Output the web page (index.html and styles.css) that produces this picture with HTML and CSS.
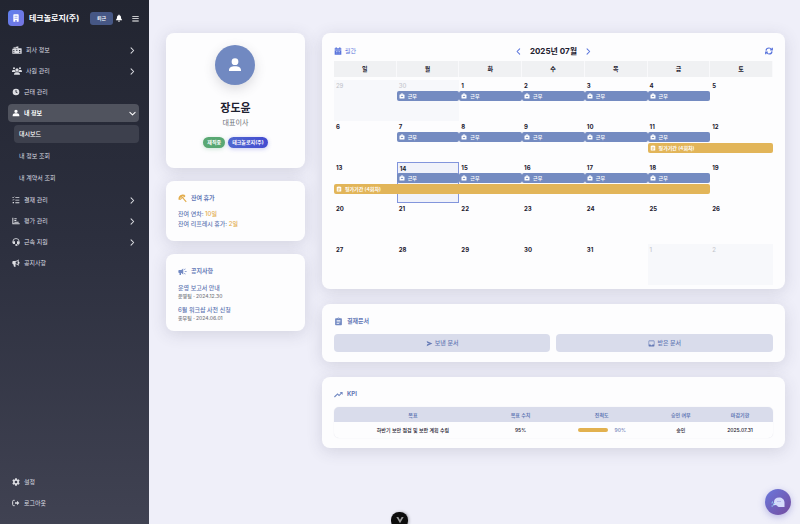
FILE: index.html
```html
<!DOCTYPE html>
<html lang="ko">
<head>
<meta charset="utf-8">
<meta name="viewport" content="width=device-width, initial-scale=1">
<title>테크놀로지(주) 대시보드</title>
<link rel="stylesheet" href="styles.css">
</head>
<body>
<svg class="sprite" aria-hidden="true">
  <symbol id="i-user" viewBox="0 0 24 24"><path d="M12 2a5 5 0 1 1 0 10 5 5 0 0 1 0-10zm-3 11h6c3.500 0 7 2.500 7 6.500V22H2v-2.500C2 15.500 5.500 13 9 13z"/></symbol>
  <symbol id="i-person" viewBox="0 0 24 24"><path d="M12 3a4.500 4.500 0 1 1 0 9 4.500 4.500 0 0 1 0-9zm0 10.500c5 0 8 2 8 5V20H4v-1.500c0-3 3-5 8-5z"/></symbol>
  <symbol id="i-right" viewBox="0 0 24 24"><path d="M7 3l9 9-9 9" fill="none" stroke="currentColor" stroke-width="3.500" stroke-linecap="round" stroke-linejoin="round"/></symbol>
  <symbol id="i-left" viewBox="0 0 24 24"><path d="M16 3l-9 9 9 9" fill="none" stroke="currentColor" stroke-width="3.500" stroke-linecap="round" stroke-linejoin="round"/></symbol>
  <symbol id="i-down" viewBox="0 0 24 24"><path d="M3 8l9 9 9-9" fill="none" stroke="currentColor" stroke-width="3.500" stroke-linecap="round" stroke-linejoin="round"/></symbol>
  <symbol id="i-case" viewBox="0 0 24 24"><path fill-rule="evenodd" d="M7 6V4a2 2 0 0 1 2-2h6a2 2 0 0 1 2 2v2h3a2 2 0 0 1 2 2v12a2 2 0 0 1-2 2H4a2 2 0 0 1-2-2V8a2 2 0 0 1 2-2zm2.500 0h5V4.500h-5zM10.500 11v2h-3v2.500h9V13h-3v-2z"/></symbol>
  <symbol id="i-clip" viewBox="0 0 24 24"><path fill-rule="evenodd" d="M19 3h-4.180C14.400 1.840 13.300 1 12 1s-2.400.840-2.820 2H5a2 2 0 0 0-2 2v15a2 2 0 0 0 2 2h14a2 2 0 0 0 2-2V5a2 2 0 0 0-2-2zm-7 0a1 1 0 1 1 0 2 1 1 0 0 1 0-2zM7 8h10v2H7zm0 4h10v2H7zm0 4h7v2H7z"/></symbol>
</svg>

<div class="app">
  <aside class="sidebar">
    <header class="brand">
      <span class="brand-logo"><svg class="icon" viewBox="0 0 24 24"><path fill-rule="evenodd" d="M6 1h12a2 2 0 0 1 2 2v20h-6v-5h-4v5H4V3a2 2 0 0 1 2-2zm2 4v3h3V5zm5 0v3h3V5zm-5 6v3h3v-3zm5 0v3h3v-3z"/></svg></span>
      <strong class="brand-name">테크놀로지(주)</strong>
      <button class="leave" type="button">퇴근</button>
      <button class="icon-btn" type="button" aria-label="알림"><svg class="icon" viewBox="0 0 24 24"><path d="M12 23a3 3 0 0 0 3-3H9a3 3 0 0 0 3 3zm9-6c-1.500-1.500-3-2.500-3-7 0-3.500-2-5.700-4.700-6.300V2.500a1.300 1.300 0 0 0-2.600 0v1.200C8 4.300 6 6.500 6 10c0 4.500-1.500 5.500-3 7-.7.800 0 2 1 2h16c1 0 1.700-1.200 1-2z"/></svg></button>
      <button class="icon-btn menu-btn" type="button" aria-label="메뉴"><svg class="icon small" viewBox="0 0 24 24"><path d="M1 3h22v3H1zm0 8h22v3H1zm0 8h22v3H1z"/></svg></button>
    </header>

    <nav class="nav">
      <a class="nav-item" href="#company"><svg class="icon wide" viewBox="0 0 30 24"><path fill-rule="evenodd" d="M10 3l9-2v6h9a1 1 0 0 1 1 1v15H1V8h4V3h3v5h2zm3 4v3h3V7zM4 12v3h3v-3zm9 0v3h3v-3zm8 0v3h4v-3zM4 17v3h3v-3zm17 0v3h4v-3z"/></svg><span>회사 정보</span><svg class="icon small"><use href="#i-right"/></svg></a>
      <a class="nav-item" href="#staff"><svg class="icon wide" viewBox="0 0 30 24"><path d="M6 1a3 3 0 1 1 0 6 3 3 0 0 1 0-6zm18 0a3 3 0 1 1 0 6 3 3 0 0 1 0-6zm-9 3a5 5 0 1 1 0 10 5 5 0 0 1 0-10zM4 9h4l2 3c0 1 .5 2 1 3H0c0-4 1-6 4-6zm18 0h4c3 0 4 2 4 6H19c.5-1 1-2 1-3zM12 16h6c4 0 6 3 6 7H6c0-4 2-7 6-7z"/></svg><span>사원 관리</span><svg class="icon small"><use href="#i-right"/></svg></a>
      <a class="nav-item" href="#attendance"><svg class="icon" viewBox="0 0 24 24"><path fill-rule="evenodd" d="M12 2a10 10 0 1 1 0 20 10 10 0 0 1 0-20zm-1.300 4v7l5 3 1.300-2-3.700-2.400V6z"/></svg><span>근태 관리</span></a>
      <a class="nav-item active" href="#me"><svg class="icon"><use href="#i-user"/></svg><span>내 정보</span><svg class="icon small"><use href="#i-down"/></svg></a>
      <div class="subnav">
        <a class="sub-item current" href="#dashboard">대시보드</a>
        <a class="sub-item" href="#profile">내 정보 조회</a>
        <a class="sub-item" href="#contract">내 계약서 조회</a>
      </div>
      <a class="nav-item" href="#approval"><svg class="icon" viewBox="0 0 24 24"><path d="M1 4l2 2 4-4M1 11l2 2 4-4" fill="none" stroke="currentColor" stroke-width="2"/><path d="M10 3h12v2.500H10zm0 8h12v2.500H10zm0 8h12v2.500H10zM2 18h4v4H2z"/></svg><span>결재 관리</span><svg class="icon small"><use href="#i-right"/></svg></a>
      <a class="nav-item" href="#review"><svg class="icon" viewBox="0 0 24 24"><path d="M1 2h3v17h19v3H1zM7 4h7v3H7zm0 5h6v3H7zm0 5h13v3H7z"/></svg><span>평가 관리</span><svg class="icon small"><use href="#i-right"/></svg></a>
      <a class="nav-item" href="#support"><svg class="icon" viewBox="0 0 24 24"><path d="M2.500 14v-3a9.500 9.500 0 0 1 19 0v5c0 3-2 5-5 5H12" fill="none" stroke="currentColor" stroke-width="2.500"/><path d="M5 10h4v8H5a3 3 0 0 1-3-3v-2a3 3 0 0 1 3-3zm10 0h4a3 3 0 0 1 3 3v2a3 3 0 0 1-3 3h-4zM10 19h5v4h-5z"/></svg><span>근속 지원</span><svg class="icon small"><use href="#i-right"/></svg></a>
      <a class="nav-item" href="#notice"><svg class="icon" viewBox="0 0 24 24"><path fill-rule="evenodd" d="M20 1v7c2 .5 3 1.500 3 3s-1 2.500-3 3v7c-3-3-6-5-10-5l1 7H6l-2-7c-2 0-3-1-3-3V9c0-2 1-3 3-3h6c4 0 7-2 10-5zm-3 5c-2 1.500-4 2.300-6 2.600v4.800c2 .3 4 1.100 6 2.600z"/></svg><span>공지사항</span></a>
    </nav>

    <nav class="nav nav-foot">
      <a class="nav-item" href="#settings"><svg class="icon" viewBox="0 0 24 24"><path fill-rule="evenodd" d="M9.500 1h5l.8 3.200 1.900 1.100L20.400 4l2.500 4.300-2.300 2.500v2.400l2.300 2.500-2.500 4.300-3.200-1.300-1.900 1.100-.8 3.200h-5l-.8-3.200-1.900-1.100L3.600 20l-2.500-4.300 2.300-2.500v-2.400L1.100 8.300 3.600 4l3.200 1.300 1.900-1.100zM12 8a4 4 0 1 0 0 8 4 4 0 0 0 0-8z"/></svg><span>설정</span></a>
      <a class="nav-item" href="#logout"><svg class="icon" viewBox="0 0 24 24"><path d="M8 4H5a3 3 0 0 0-3 3v10a3 3 0 0 0 3 3h3" fill="none" stroke="currentColor" stroke-width="3"/><path d="M15 5l7 7-7 7v-4.500H9v-5h6z"/></svg><span>로그아웃</span></a>
    </nav>
  </aside>

  <main class="main">
    <div class="column left">
      <section class="card profile">
        <span class="avatar"><svg class="icon"><use href="#i-person"/></svg></span>
        <h1 class="name">장도윤</h1>
        <p class="position">대표이사</p>
        <div class="badges"><span class="badge green">재직중</span><span class="badge blue">테크놀로지(주)</span></div>
      </section>

      <section class="card leave-card">
        <h2 class="card-title"><svg class="icon title-icon amber" viewBox="0 0 24 24"><path d="M2 16C0 9 4 3 10 2c4-1 8 0 10 2L15 6l-3-1-3 4-3 1-1 5z"/><path d="M10 7l12 14M14 8l5-2M6 15l4-5" fill="none" stroke="currentColor" stroke-width="3"/></svg>잔여 휴가</h2>
        <p class="line">잔여 연차: <span class="amber">10일</span></p>
        <p class="line">잔여 리프레시 휴가: <span class="amber">2일</span></p>
      </section>

      <section class="card notice-card">
        <h2 class="card-title"><svg class="icon title-icon" viewBox="0 0 24 24"><path d="M18 11h5v2.500h-5zm-2 6.600l1.200-1.600 3.200 2.400-1.200 1.600zM20.400 5.600L19.200 4 16 6.400 17.200 8zM3 8a2 2 0 0 0-2 2v4a2 2 0 0 0 2 2h1v5h4v-5h1l5 4V4L9 8z"/></svg>공지사항</h2>
        <a class="post" href="#post-1"><span>운영 보고서 안내</span><small>운영팀 · 2024.12.30</small></a>
        <a class="post" href="#post-2"><span>6월 워크샵 사전 신청</span><small>총무팀 · 2024.06.01</small></a>
      </section>
    </div>

    <div class="column right">
      <section class="card calendar">
        <header class="cal-head">
          <button class="view" type="button"><svg class="icon" viewBox="0 0 24 24"><path fill-rule="evenodd" d="M5 1h3v3h8V1h3v3h3v4H2V4h3zM2 9.500h20V23H2zM6 12v2h2v-2zm5 0v2h2v-2zm5 0v2h2v-2zM6 17v2h2v-2zm5 0v2h2v-2zm5 0v2h2v-2z"/></svg>월간</button>
          <div class="month">
            <button class="icon-btn" type="button" aria-label="이전 달"><svg class="icon small"><use href="#i-left"/></svg></button>
            <h2>2025년 07월</h2>
            <button class="icon-btn" type="button" aria-label="다음 달"><svg class="icon small"><use href="#i-right"/></svg></button>
          </div>
          <button class="icon-btn refresh" type="button" aria-label="새로고침"><svg class="icon" viewBox="0 0 24 24"><path d="M3 11c.5-5 4.500-8 9-8 3.500 0 6 1.500 8 4.500M22 2v6.500h-6.500M21 13c-.5 5-4.500 8-9 8-3.500 0-6-1.500-8-4.500M2 22v-6.500h6.500" fill="none" stroke="currentColor" stroke-width="3.500"/></svg></button>
        </header>
        <div class="weekdays"><span>일</span><span>월</span><span>화</span><span>수</span><span>목</span><span>금</span><span>토</span></div>

        <div class="week">
          <time class="day c1 other">29</time><time class="day c2 other">30</time><time class="day c3">1</time><time class="day c4">2</time><time class="day c5">3</time><time class="day c6">4</time><time class="day c7">5</time>
          <span class="event c2"><svg class="icon"><use href="#i-case"/></svg>근무</span><span class="event c3"><svg class="icon"><use href="#i-case"/></svg>근무</span><span class="event c4"><svg class="icon"><use href="#i-case"/></svg>근무</span><span class="event c5"><svg class="icon"><use href="#i-case"/></svg>근무</span><span class="event c6"><svg class="icon"><use href="#i-case"/></svg>근무</span>
        </div>
        <div class="week">
          <time class="day c1">6</time><time class="day c2">7</time><time class="day c3">8</time><time class="day c4">9</time><time class="day c5">10</time><time class="day c6">11</time><time class="day c7">12</time>
          <span class="event c2"><svg class="icon"><use href="#i-case"/></svg>근무</span><span class="event c3"><svg class="icon"><use href="#i-case"/></svg>근무</span><span class="event c4"><svg class="icon"><use href="#i-case"/></svg>근무</span><span class="event c5"><svg class="icon"><use href="#i-case"/></svg>근무</span><span class="event c6"><svg class="icon"><use href="#i-case"/></svg>근무</span>
          <span class="event period span-end"><svg class="icon"><use href="#i-clip"/></svg>평가기간 (4회차)</span>
        </div>
        <div class="week">
          <time class="day c1">13</time><time class="day c2 today">14</time><time class="day c3">15</time><time class="day c4">16</time><time class="day c5">17</time><time class="day c6">18</time><time class="day c7">19</time>
          <span class="event c2"><svg class="icon"><use href="#i-case"/></svg>근무</span><span class="event c3"><svg class="icon"><use href="#i-case"/></svg>근무</span><span class="event c4"><svg class="icon"><use href="#i-case"/></svg>근무</span><span class="event c5"><svg class="icon"><use href="#i-case"/></svg>근무</span><span class="event c6"><svg class="icon"><use href="#i-case"/></svg>근무</span>
          <span class="event period span-start"><svg class="icon"><use href="#i-clip"/></svg>평가기간 (4회차)</span>
        </div>
        <div class="week">
          <time class="day c1">20</time><time class="day c2">21</time><time class="day c3">22</time><time class="day c4">23</time><time class="day c5">24</time><time class="day c6">25</time><time class="day c7">26</time>
        </div>
        <div class="week">
          <time class="day c1">27</time><time class="day c2">28</time><time class="day c3">29</time><time class="day c4">30</time><time class="day c5">31</time><time class="day c6 other">1</time><time class="day c7 other">2</time>
        </div>
      </section>

      <section class="card docs">
        <h2 class="card-title"><svg class="icon title-icon"><use href="#i-clip"/></svg>결재문서</h2>
        <div class="doc-actions">
          <button type="button"><svg class="icon small" viewBox="0 0 24 24"><path d="M2 3l20 9-20 9 3-7.500 8-1.500-8-1.500z"/></svg>보낸 문서</button>
          <button type="button"><svg class="icon small" viewBox="0 0 24 24"><path fill-rule="evenodd" d="M4 2h16a2 2 0 0 1 2 2v16a2 2 0 0 1-2 2H4a2 2 0 0 1-2-2V4a2 2 0 0 1 2-2zm0 2.500V15h5a3 3 0 0 0 6 0h5V4.500z"/></svg>받은 문서</button>
        </div>
      </section>

      <section class="card kpi">
        <h2 class="card-title"><svg class="icon title-icon" viewBox="0 0 24 24"><path d="M15 5l3 3-4.500 4.500-4-4L0 17.500 2.200 20l7.300-7.500 4 4 6.700-6.300L23 13V5z"/></svg>KPI</h2>
        <table>
          <colgroup><col class="w-goal"><col class="w-value"><col class="w-progress"><col class="w-state"><col class="w-due"></colgroup>
          <thead><tr><th>목표</th><th>목표 수치</th><th>진척도</th><th>승인 여부</th><th>마감기한</th></tr></thead>
          <tbody><tr>
            <td>하반기 보안 점검 및 보완 계획 수립</td><td>95%</td>
            <td><div class="progress"><span class="bar"></span><span>90%</span></div></td>
            <td>승인</td><td>2025.07.31</td>
          </tr></tbody>
        </table>
      </section>
    </div>
  </main>
</div>

<button class="chat" type="button" aria-label="채팅 상담"><svg class="icon" viewBox="0 0 28 24"><path d="M6 12c0-6 4-9 10-9s11 4 11 10v9h-9c-3 0-5-1-6-3l-3-1-5 1 1-3z" fill="#d5dcfb"/><path d="M3 11l-1 4M8 14l-5 5M1 20l2 1" fill="none" stroke="#8ed2f2" stroke-width="2"/><path d="M12 12l2-2 1 2 2-2 1 2 2-2" fill="none" stroke="#a9adea" stroke-width="1.500"/></svg></button>
<button class="devtools" type="button" aria-label="개발 도구"><svg class="icon" viewBox="0 0 24 24"><path d="M1 3h6l5 9 5-9h6L12 22z" fill="#9a9a9a"/></svg></button>
</body>
</html>
```

FILE: styles.css
```css
* { box-sizing: border-box; }

body {
  margin: 0;
  background: #efeff9;
  color: #1d2130;
  font: 6px/10px Inter, "Noto Sans CJK KR", sans-serif;
}

h1, h2, p { margin: 0; }
a { color: inherit; text-decoration: none; }
button { margin: 0; padding: 0; border: 0; background: none; color: inherit; font: inherit; cursor: pointer; }

.sprite { position: absolute; width: 0; height: 0; }
.icon { width: 8px; height: 8px; flex: none; fill: currentColor; }
.icon.small { width: 7px; height: 7px; }
.icon.wide { width: 10px; }
.icon-btn { display: flex; align-items: center; justify-content: center; }

.app { display: flex; min-height: 100vh; }

/* Sidebar */
.sidebar {
  display: flex;
  flex-direction: column;
  flex: none;
  width: 149px;
  padding: 10px 10px 12px 8px;
  background: linear-gradient(#222531, #2c2f3e 45%, #404252);
  color: #dcdde2;
}
.brand { display: flex; align-items: center; height: 16px; margin-bottom: 15px; color: #fff; }
.brand-logo {
  display: flex;
  align-items: center;
  justify-content: center;
  width: 16px;
  height: 16px;
  margin-right: 5px;
  border-radius: 4px;
  background: linear-gradient(135deg, #5e80ee, #7674e0);
}
.brand-name { flex: 1; font-size: 8px; white-space: nowrap; }
.leave {
  width: 23px;
  height: 13px;
  margin-right: 2px;
  border-radius: 3px;
  background: #465785;
  font-size: 5px;
  font-weight: 500;
  line-height: 13px;
}
.menu-btn { margin-left: 9px; }

.nav { display: flex; flex-direction: column; gap: 3px; }
.nav-item {
  display: flex;
  align-items: center;
  gap: 4px;
  height: 18px;
  padding: 0 3px 0 4px;
  border-radius: 4px;
}
.nav-item span { flex: 1; }
.nav-item.active { background: #50535e; color: #fff; font-weight: 600; }
.subnav { display: flex; flex-direction: column; gap: 4px; padding: 0 0 1px 6px; }
.sub-item { height: 18px; padding: 0 5px; border-radius: 4px; line-height: 18px; }
.sub-item.current { background: #3d404d; color: #fff; font-weight: 500; }
.nav-foot { margin-top: auto; }

/* Layout */
.main {
  display: grid;
  grid-template-columns: minmax(0, 3fr) minmax(0, 10fr);
  gap: 17px;
  align-items: start;
  flex: 1;
  padding: 33px 15px 16px 17px;
}
.column { display: flex; flex-direction: column; }
.left { gap: 13px; }
.right { gap: 15px; }
.card {
  padding: 12px;
  border-radius: 8px;
  background: #fdfdfe;
  box-shadow: 0 3px 16px rgba(60, 65, 95, 0.16);
}
.card-title {
  display: flex;
  align-items: center;
  gap: 4px;
  color: #6478b6;
  font-size: 6px;
  font-weight: 700;
  line-height: 12px;
}
.title-icon { width: 9px; height: 9px; color: #7289c2; }
.amber, .title-icon.amber { color: #e2ac4c; }

/* Profile */
.profile { display: flex; flex-direction: column; align-items: center; padding-bottom: 20px; }
.avatar {
  display: flex;
  align-items: center;
  justify-content: center;
  width: 40px;
  height: 40px;
  border-radius: 50%;
  background: #7189c1;
  box-shadow: 0 4px 12px rgba(60, 60, 80, 0.18);
  color: #fff;
}
.avatar .icon { width: 18px; height: 18px; }
.name { margin-top: 14px; font-size: 11px; line-height: 18px; }
.position { color: #6d6f78; font-size: 7px; line-height: 12px; }
.badges { display: flex; gap: 3px; margin-top: 8px; }
.badge {
  padding: 0 4px;
  border-radius: 6px;
  color: #fff;
  font-size: 5px;
  font-weight: 700;
  line-height: 11px;
}
.badge.green { background: #59a873; box-shadow: 0 1px 4px rgba(89, 168, 115, 0.3); }
.badge.blue { background: linear-gradient(90deg, #5068cf, #434bd0); box-shadow: 0 1px 4px rgba(67, 75, 208, 0.3); }

.leave-card { padding-top: 11px; color: #6075b2; }
.leave-card .card-title { margin-bottom: 5px; }
.line { font-weight: 500; }
.notice-card { padding-top: 11px; padding-bottom: 9px; }
.notice-card .card-title { margin-bottom: 6px; }
.post { display: flex; flex-direction: column; color: #6075b2; font-weight: 500; line-height: 9px; }
.post + .post { margin-top: 5px; }
.post small { color: #7b7c84; font-size: 5px; line-height: 8px; }

/* Calendar */
.calendar { padding-bottom: 4px; }
.cal-head { display: grid; grid-template-columns: 1fr auto 1fr; align-items: center; height: 12px; margin-bottom: 4px; color: #5974dc; }
.view { display: flex; align-items: center; gap: 3px; }
.month { display: flex; align-items: center; gap: 8px; }
.month h2 { color: #1d2130; font-size: 8px; line-height: 12px; }
.refresh { justify-self: end; }
.weekdays { display: grid; grid-template-columns: repeat(7, minmax(0, 1fr)); margin-bottom: 3px; background: #f0f1f3; }
.weekdays span { border-right: 1px solid #f9f9fb; font-weight: 700; line-height: 16px; text-align: center; }
.week {
  display: grid;
  grid-template-columns: repeat(7, minmax(0, 1fr));
  grid-template-rows: 11px 10px 11px 9px;
}
.c1 { grid-column: 1; }
.c2 { grid-column: 2; }
.c3 { grid-column: 3; }
.c4 { grid-column: 4; }
.c5 { grid-column: 5; }
.c6 { grid-column: 6; }
.c7 { grid-column: 7; }
.day { grid-row: 1 / -1; padding: 1px 2px; font-weight: 700; }
.day.other { background: #f7f8fb; color: #c5c7cd; font-weight: 500; }
.day.today { border: 1px solid #8295dc; background: #f0f2fa; }
.event {
  display: flex;
  align-items: center;
  gap: 3px;
  grid-row: 2;
  padding: 0 2px;
  border-radius: 2px;
  background: #748bc1;
  color: #fff;
  font-size: 5px;
  font-weight: 500;
  white-space: nowrap;
}
.event .icon { width: 6px; height: 6px; }
.period { grid-row: 3; margin-top: 1px; background: #e2b559; font-weight: 600; }
.span-end { grid-column: 6 / 8; }
.span-start { grid-column: 1 / 7; }

/* Documents */
.docs, .kpi { padding-top: 11px; padding-bottom: 10px; }
.docs .card-title, .kpi .card-title { margin-bottom: 7px; }
.doc-actions { display: grid; grid-template-columns: 1fr 1fr; gap: 6px; }
.doc-actions button {
  display: flex;
  align-items: center;
  justify-content: center;
  gap: 2px;
  height: 18px;
  border-radius: 4px;
  background: #d9dceb;
  color: #6479b5;
  font-weight: 500;
}

/* KPI */
table { width: 100%; border-spacing: 0; table-layout: fixed; border-radius: 5px; overflow: hidden; box-shadow: 0 0 1px #dcdde5; }
.w-goal { width: 36%; }
.w-value { width: 13%; }
.w-progress { width: 24%; }
.w-state { width: 12%; }
.w-due { width: 15%; }
th, td { padding: 0; font-size: 5px; text-align: center; }
th { height: 15px; background: #d9dceb; color: #6479b5; font-weight: 600; }
td { height: 16px; font-weight: 500; }
.progress { display: flex; align-items: center; justify-content: center; gap: 7px; color: #7182b8; }
.bar { width: 30px; height: 4px; border-radius: 2px; background: #e2b14f; }

/* Floating buttons */
.chat {
  position: fixed;
  right: 9px;
  bottom: 9px;
  display: flex;
  align-items: center;
  justify-content: center;
  width: 26px;
  height: 26px;
  border-radius: 50%;
  background: linear-gradient(135deg, #6a78dc, #744c9f);
  box-shadow: 0 2px 7px rgba(102, 100, 200, 0.4);
}
.chat .icon { width: 14px; height: 12px; }
.devtools {
  position: fixed;
  bottom: -5px;
  left: 50%;
  display: flex;
  justify-content: center;
  width: 17px;
  height: 17px;
  margin-left: -9px;
  padding-top: 4px;
  border-radius: 8px;
  background: #0c0c0c;
  box-shadow: 1px 0 3px rgba(0, 0, 0, 0.3);
}
```
